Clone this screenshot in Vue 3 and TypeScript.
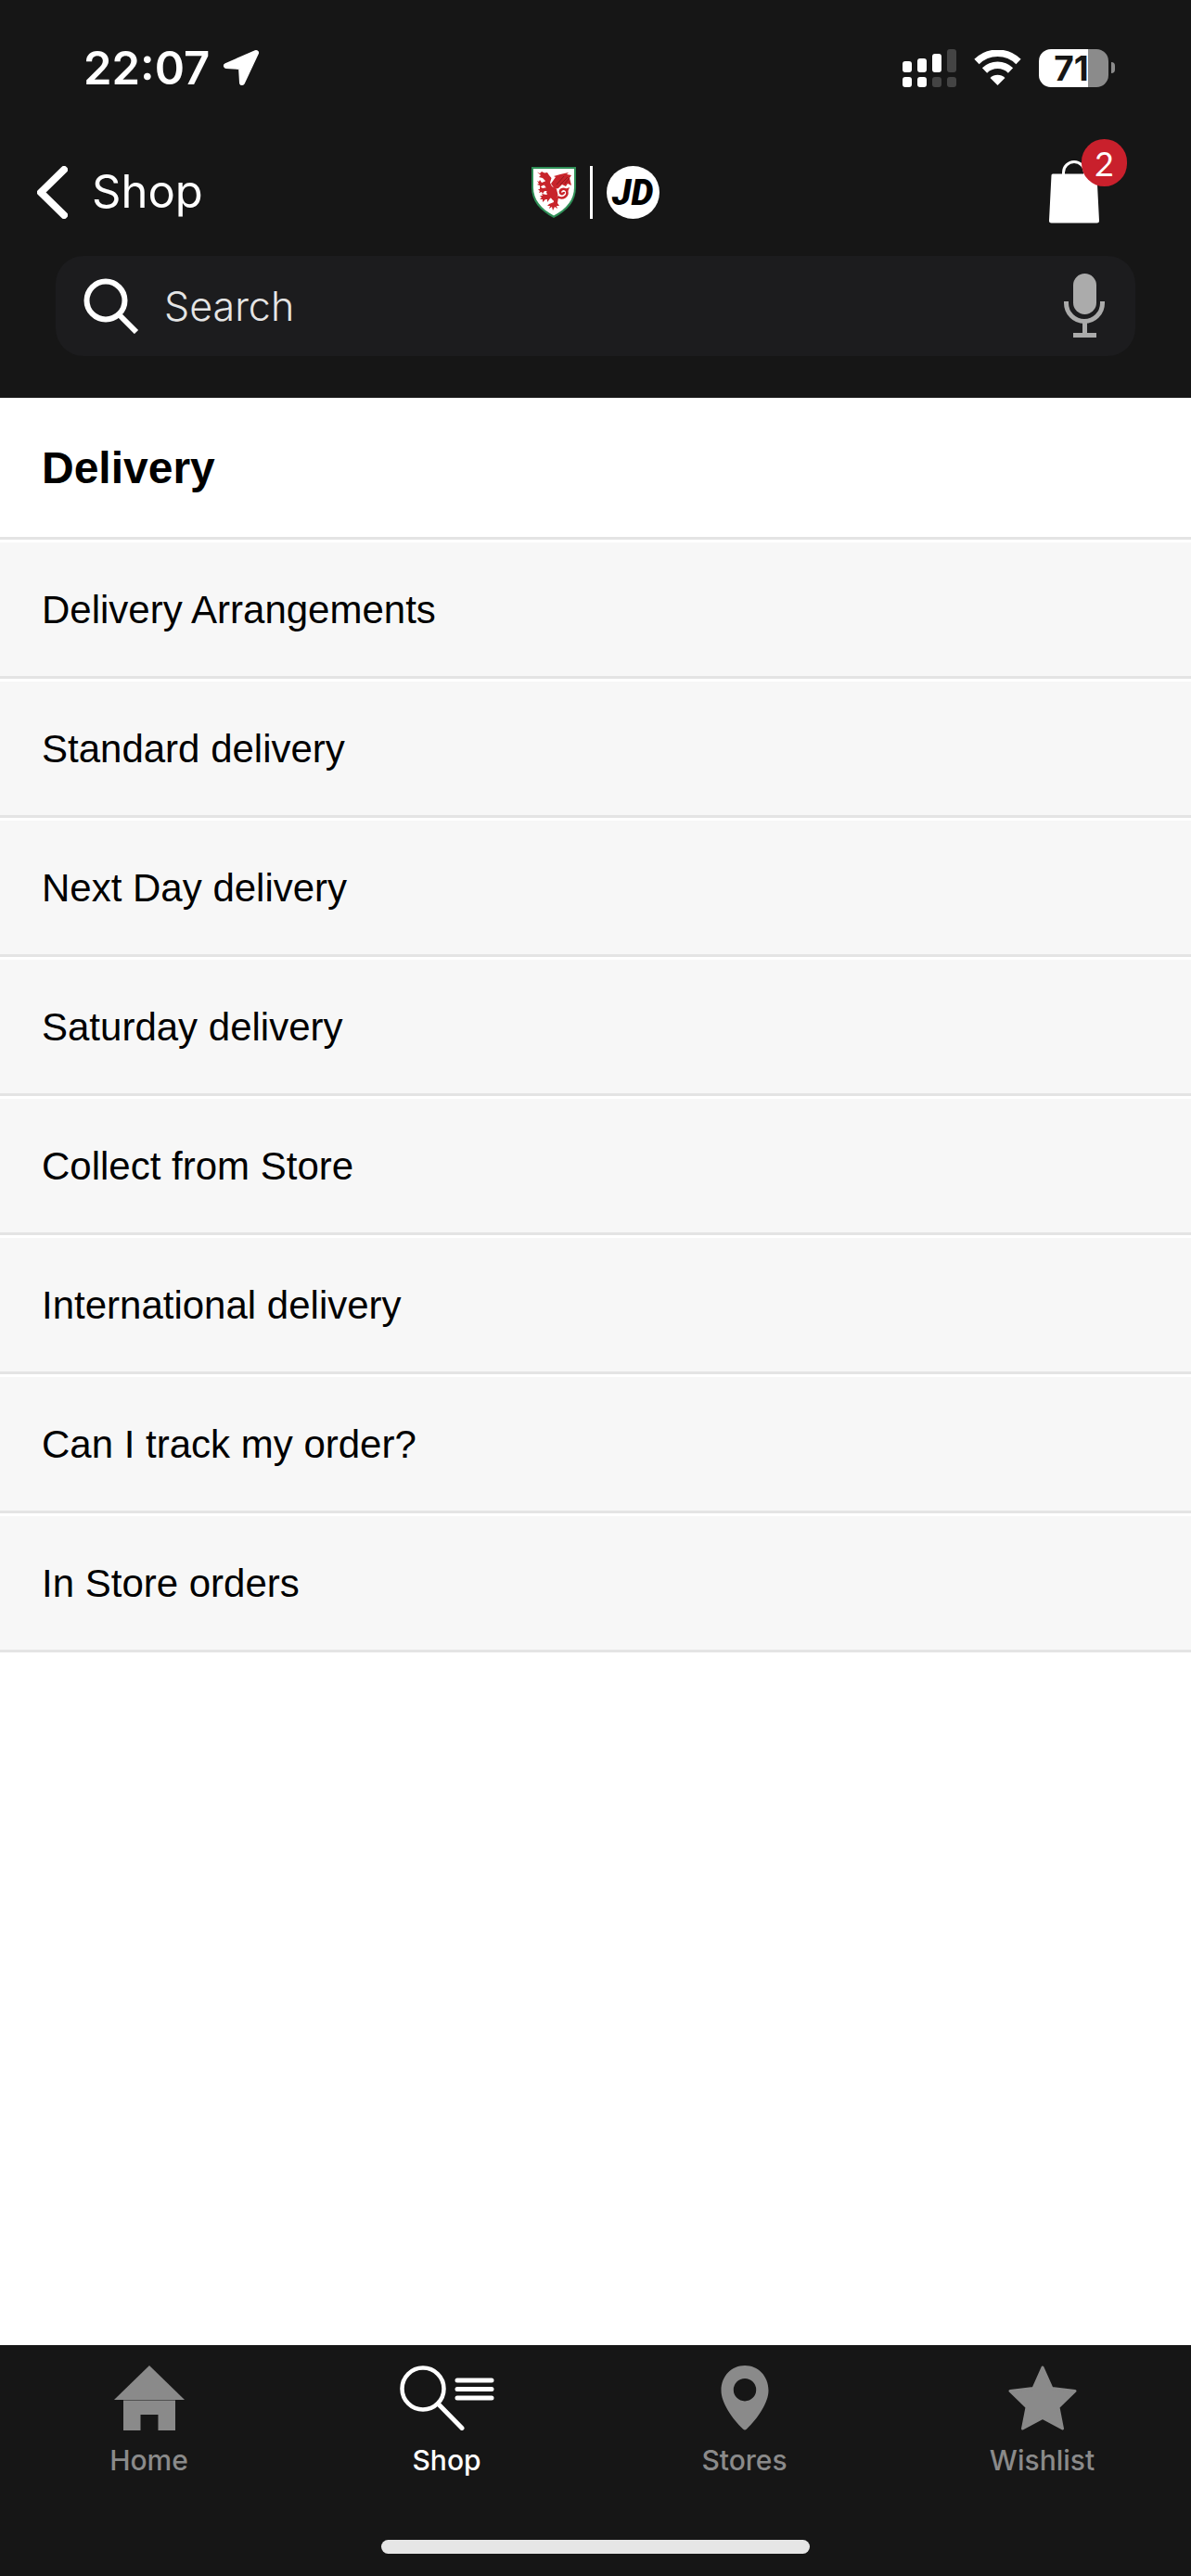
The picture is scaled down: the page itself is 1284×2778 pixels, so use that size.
<script setup lang="ts">
import { ref } from 'vue'

interface Tab {
  id: 'home' | 'shop' | 'stores' | 'wishlist'
  label: string
}

const tabs: Tab[] = [
  { id: 'home', label: 'Home' },
  { id: 'shop', label: 'Shop' },
  { id: 'stores', label: 'Stores' },
  { id: 'wishlist', label: 'Wishlist' },
]

const topics: string[] = [
  'Delivery Arrangements',
  'Standard delivery',
  'Next Day delivery',
  'Saturday delivery',
  'Collect from Store',
  'International delivery',
  'Can I track my order?',
  'In Store orders',
]

const active = ref<Tab['id']>('shop')
const query = ref('')
const bagCount = 2
</script>

<template>
  <div class="app">
    <header class="header">
      <div class="status">
        <div class="status-left">
          <span class="time">22:07</span>
          <svg width="40" height="40" viewBox="0 0 40 40" aria-hidden="true">
            <path d="M36 4 L4 18 L20 19 L21 36 Z" fill="#fff" stroke="#fff" stroke-width="6" stroke-linejoin="round" />
          </svg>
        </div>
        <div class="status-right">
          <svg width="58" height="41" viewBox="0 0 58 41" aria-hidden="true">
            <g fill="#fff">
              <rect x="0" y="13" width="10" height="12" rx="3" />
              <rect x="16" y="10" width="10" height="15" rx="3" />
              <rect x="32" y="5" width="10" height="20" rx="3" />
              <rect x="0" y="30" width="10" height="11" rx="3" />
              <rect x="16" y="30" width="10" height="11" rx="3" />
            </g>
            <g fill="#444">
              <rect x="48" y="0" width="10" height="25" rx="3" />
              <rect x="32" y="30" width="10" height="11" rx="3" />
              <rect x="48" y="30" width="10" height="11" rx="3" />
            </g>
          </svg>
          <svg width="51" height="39" viewBox="0 0 51 39" aria-hidden="true">
            <path d="M3 12.500 A32 32 0 0 1 48 12.500" fill="none" stroke="#fff" stroke-width="7.500" />
            <path d="M11.500 22 A20 20 0 0 1 39.500 22" fill="none" stroke="#fff" stroke-width="7.500" />
            <path d="M17.500 30 A11.500 11.500 0 0 1 33.500 30 L25.500 38 Z" fill="#fff" />
          </svg>
          <div class="battery">
            <div class="battery-body"><span>71</span></div>
            <div class="battery-nub"></div>
          </div>
        </div>
      </div>

      <div class="nav">
        <button class="back" type="button">
          <svg width="33" height="57" viewBox="0 0 33 57" aria-hidden="true">
            <path d="M29 4 L4 28.500 L29 53" fill="none" stroke="#fff" stroke-width="8" stroke-linecap="round" stroke-linejoin="round" />
          </svg>
          <span>Shop</span>
        </button>

        <div class="brand">
          <svg width="48" height="57" viewBox="0 0 48 57" aria-hidden="true">
            <path d="M0 1 H48 V23 C48 38 39 48 24 56 C9 48 0 38 0 23 Z" fill="#2f8f57" />
            <path d="M2 3 H46 V23 C46 36 38 46 24 53.500 C10 46 2 36 2 23 Z" fill="#fff" />
            <g fill="#c8242b">
              <path d="M6 6.500 L9 8 L11 6 L14 7.500 L17 7 L19 10 L21.500 13 L20 18 L22 22 L27 25 L28.500 31 L27 36 L23 37 L19 32 L16 29 L17 25 L14 21 L15 16 L12 13 L8 12 L10 10 Z" />
              <path d="M21 19 L26 12 L24 11 L31 9 L40 7 L38 9 L43 10 L41 13 L43 21 L39 19 L37 22 L33 20 L29 24 L25 25 Z" />
              <path d="M16 16 L11 18 L9 15 L8 17 L6 16 L8 19 L6 20 L9 21 L9 23 L12 21 L17 20 Z" />
              <path d="M17 23 L12 24 L9 22 L9 25 L7 25 L9 27 L8 29 L11 28 L12 30 L14 27 L18 27 Z" />
              <path d="M19 29 L16 31 L11 30 L12 32 L9 32 L11 34 L9 36 L12 36 L12 39 L15 36 L17 36 L17 39 L20 35 L23 33 Z" />
              <path d="M23 34 L24 39 L19 41 L17 43 L20 43 L19 46 L22 44 L23 48 L25 44 L28 46 L27 43 L30 43 L28 40 L29 34 Z" />
            </g>
            <path d="M28 33 C34 37 40 32 38 27 C36 23 30 25 31 29 C32 31 35 30 35 28" fill="none" stroke="#c8242b" stroke-width="2.500" />
            <path d="M36 25 L41 23 L39 28 Z" fill="#c8242b" />
            <path d="M27 20 L35 11 M31 20 L39 12 M36 19 L41 13" fill="none" stroke="#8f1a20" stroke-width="1" />
          </svg>
          <span class="brand-rule"></span>
          <svg width="57" height="57" viewBox="0 0 57 57" role="img" aria-label="JD">
            <circle cx="28.500" cy="28.500" r="28.500" fill="#fff" />
            <text x="28" y="42" text-anchor="middle" class="brand-mark">JD</text>
          </svg>
        </div>

        <button class="bag" type="button" aria-label="Bag">
          <svg width="54" height="68" viewBox="0 0 54 68" aria-hidden="true">
            <path d="M15.500 16 V13 A11.500 11.500 0 0 1 38.500 13 V16" fill="none" stroke="#fff" stroke-width="3" />
            <path d="M4 14.500 H50 Q51.500 14.500 51.500 16 L54 65 Q54 67.500 51.500 67.500 H2.500 Q0 67.500 0 65 L2.500 16 Q2.500 14.500 4 14.500 Z" fill="#fff" />
          </svg>
          <span class="badge">{{ bagCount }}</span>
        </button>
      </div>

      <label class="search">
        <svg width="60" height="60" viewBox="0 0 60 60" aria-hidden="true">
          <circle cx="24" cy="24" r="20.500" fill="none" stroke="#fff" stroke-width="6" />
          <path d="M38 39 L57 58" stroke="#fff" stroke-width="6" />
        </svg>
        <input v-model="query" type="text" placeholder="Search" aria-label="Search" />
        <svg width="44" height="70" viewBox="0 0 44 70" fill="#ababab" aria-hidden="true">
          <rect x="10" y="0" width="25" height="44" rx="12.500" />
          <path d="M2.500 30 V32 A19.500 19.500 0 0 0 41.500 32 V30" fill="none" stroke="#ababab" stroke-width="5" />
          <rect x="20" y="51" width="5" height="14" />
          <rect x="10" y="64" width="25" height="5" />
        </svg>
      </label>
    </header>

    <main class="content">
      <h1 class="title">Delivery</h1>
      <ul class="topics">
        <li v-for="topic in topics" :key="topic">
          <a href="#">{{ topic }}</a>
        </li>
      </ul>
    </main>

    <footer class="footer">
      <nav class="tabs">
        <button
          v-for="tab in tabs"
          :key="tab.id"
          type="button"
          class="tab"
          :class="{ active: active === tab.id }"
          @click="active = tab.id"
        >
          <svg v-if="tab.id === 'home'" width="76" height="70" viewBox="0 0 76 70" fill="currentColor" aria-hidden="true">
            <path d="M38 0 L76 37 H0 Z" />
            <path d="M10 37.500 H66 V70 H47.500 V53 H28.500 V70 H10 Z" />
          </svg>
          <svg v-else-if="tab.id === 'shop'" width="102" height="70" viewBox="0 0 102 70" fill="none" stroke="currentColor" stroke-linecap="round" aria-hidden="true">
            <circle cx="25" cy="25" r="22.500" stroke-width="4.500" />
            <path d="M42 42 L67 67.500" stroke-width="5" />
            <path d="M62 16 H99 M62 25.500 H99 M62 35 H99" stroke-width="5" />
          </svg>
          <svg v-else-if="tab.id === 'stores'" width="52" height="70" viewBox="0 0 52 70" fill="currentColor" aria-hidden="true">
            <path fill-rule="evenodd" d="M26 0 C40 0 51.500 11 51.500 27 C51.500 40 40 57 28 68.500 Q26 70.500 24 68.500 C12 57 .5 40 .5 27 C.5 11 12 0 26 0 Z M26 14 A12.200 12.200 0 1 0 26 38.400 A12.200 12.200 0 1 0 26 14 Z" />
          </svg>
          <svg v-else width="74" height="70" viewBox="0 0 74 70" fill="currentColor" stroke="currentColor" stroke-width="3" stroke-linejoin="round" aria-hidden="true">
            <path d="M37 2 L47 24.500 L72 27.500 L54 45 L58.500 68 L37 56.500 L15.500 68 L20 45 L2 27.500 L27 24.500 Z" />
          </svg>
          <span>{{ tab.label }}</span>
        </button>
      </nav>
      <div class="home-indicator"></div>
    </footer>
  </div>
</template>

<style>
body {
  margin: 0;
  background: #fff;
}
</style>

<style scoped>
.app {
  display: flex;
  flex-direction: column;
  min-height: 100vh;
  font-family: Inter, 'Liberation Sans', sans-serif;
  color: #000;
  background: #fff;
}

button {
  padding: 0;
  border: 0;
  background: none;
  color: inherit;
  font: inherit;
  cursor: pointer;
}

svg {
  display: block;
  flex: none;
}

.header {
  padding: 43px 60px 45px;
  background: #161616;
  color: #fff;
}

.status {
  display: flex;
  align-items: center;
  justify-content: space-between;
  height: 60px;
  padding: 0 22px 0 30px;
}

.status-left {
  display: flex;
  align-items: center;
  gap: 14px;
}

.time {
  font-size: 49px;
  font-weight: 600;
}

.status-right {
  display: flex;
  align-items: center;
  gap: 19px;
}

.battery {
  display: flex;
  align-items: center;
  gap: 3px;
}

.battery-body {
  box-sizing: border-box;
  width: 75px;
  height: 41px;
  padding-right: 5px;
  border-radius: 13px;
  background: linear-gradient(to right, #fff 71%, #8b8b8b 71%);
  color: #161616;
  font-size: 37px;
  font-weight: 700;
  line-height: 41px;
  text-align: center;
}

.battery-nub {
  width: 4px;
  height: 12px;
  border-radius: 0 4px 4px 0;
  background: #8b8b8b;
}

.nav {
  display: grid;
  grid-template-columns: 1fr auto 1fr;
  align-items: center;
  height: 114px;
  margin: 47px -20px 0;
}

.back {
  display: flex;
  align-items: center;
  gap: 26px;
  font-size: 49px;
  line-height: 60px;
}

.brand {
  display: flex;
  align-items: center;
  gap: 15px;
}

.brand-rule {
  width: 3px;
  height: 57px;
  background: #fff;
}

.brand-mark {
  font-family: Roboto, sans-serif;
  font-size: 38px;
  font-style: italic;
  font-weight: 900;
}

.bag {
  position: relative;
  justify-self: end;
  margin-right: 59px;
}

.badge {
  position: absolute;
  top: -23px;
  right: -30px;
  width: 49px;
  height: 51px;
  border-radius: 25px;
  background: #c9202c;
  font-family: Lato, sans-serif;
  font-size: 36px;
  line-height: 52px;
  text-align: center;
}

.search {
  display: flex;
  align-items: center;
  gap: 27px;
  height: 108px;
  margin-top: 12px;
  padding: 0 33px 0 30px;
  box-sizing: border-box;
  border-radius: 30px;
  background: #1c1c1e;
}

.search input {
  flex: 1;
  min-width: 0;
  padding: 0;
  border: 0;
  outline: 0;
  background: none;
  color: #e5e5e5;
  font: 300 43px Inter, sans-serif;
}

.search input::placeholder {
  color: #e5e5e5;
  opacity: 1;
}

.content {
  flex: 1;
  font-family: 'Liberation Sans', Arial, sans-serif;
}

.title {
  margin: 0;
  padding: 2px 45px 0;
  border-bottom: 3px solid #e4e4e4;
  font-size: 48px;
  line-height: 148px;
}

.topics {
  margin: 0;
  padding: 0;
  list-style: none;
}

.topics a {
  display: block;
  padding: 2px 45px 0;
  border-top: 3px solid #fff;
  border-bottom: 3px solid #e4e4e4;
  background: #f7f7f7;
  color: #000;
  font-size: 42px;
  line-height: 142px;
  text-decoration: none;
}

.footer {
  display: flex;
  flex-direction: column;
  align-items: center;
  gap: 68px;
  padding: 22px 0 24px;
  background: #161616;
}

.tabs {
  display: flex;
  width: 100%;
}

.tab {
  display: flex;
  flex: 1;
  flex-direction: column;
  align-items: center;
  gap: 14px;
  color: #8a8a8a;
  font-size: 30px;
  font-weight: 500;
  line-height: 36px;
}

.tab.active {
  color: #fff;
}

.home-indicator {
  width: 36%;
  height: 15px;
  border-radius: 8px;
  background: #e6e6e6;
}
</style>
